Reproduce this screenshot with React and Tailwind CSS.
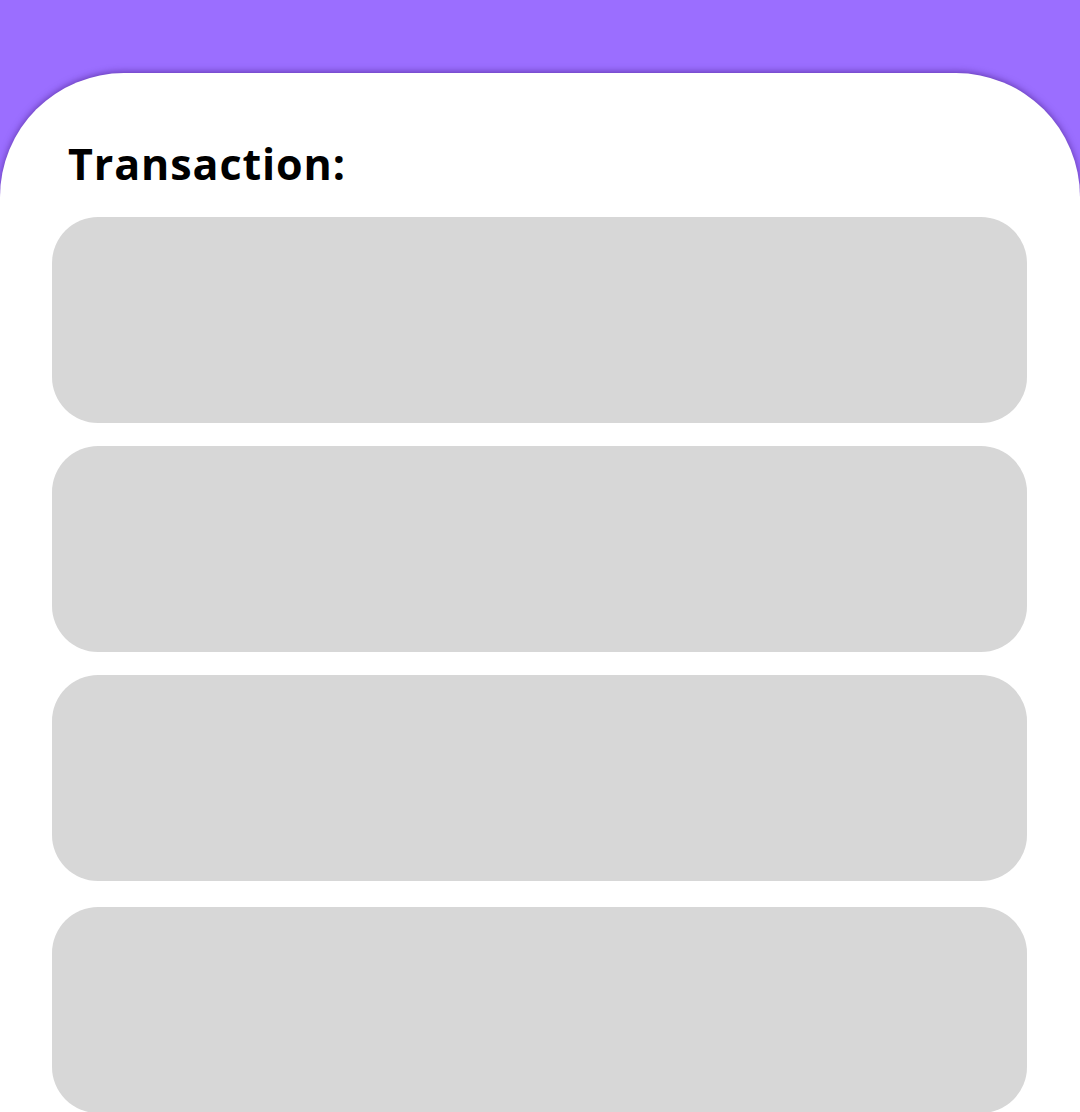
import React from "react";

const cards = [0, 1, 2, 3];

const App = () => {
  return (
    <div className="min-h-[1112px] bg-[#9b6eff] pt-[73px] overflow-hidden" style={{ fontFamily: "'Open Sans', Lato, sans-serif" }}>
      <div className="min-h-[1039px] rounded-t-[124px] bg-white shadow-[0_-1px_7px_rgba(60,20,120,0.6)] pt-[64px]">
        <h1 className="pl-[68px] text-[43px] font-bold leading-[54px] text-black tracking-[0.9px]">Transaction:</h1>
        <div className="mt-[26px] flex flex-col gap-[23px] pl-[52px] pr-[53px]">
          {cards.map((c) => (
            <div key={c} className={`h-[206px] rounded-[46px] bg-[#d7d7d7] ${c === 3 ? "mt-[3px]" : ""}`} />
          ))}
        </div>
      </div>
    </div>
  );
};

export default App;
